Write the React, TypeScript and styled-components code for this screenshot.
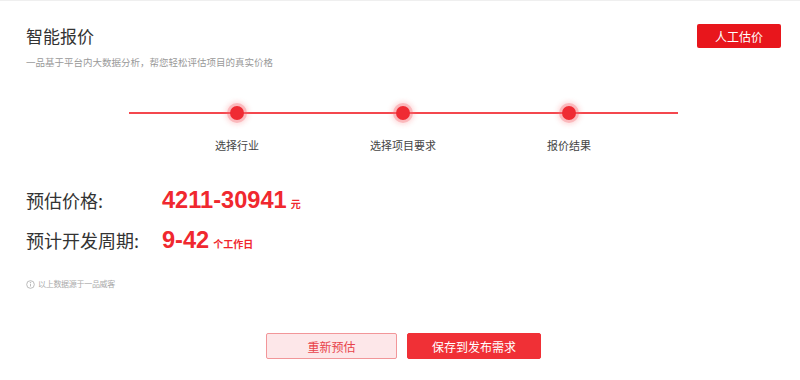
import React from 'react';
import styled, { createGlobalStyle } from 'styled-components';

const GlobalStyle = createGlobalStyle`
    html, body {
        margin: 0;
        padding: 0;
        background: #fff;
    }
    body {
        font-family: "Noto Sans CJK SC", "Liberation Sans", sans-serif;
        color: #333;
    }
`;

const Page = styled.div`
    width: 800px;
    height: 380px;
    box-sizing: border-box;
    border-top: 1px solid #efefef;
    padding: 23px 19px 0 26px;
    overflow: hidden;
`;

const Header = styled.div`
    display: flex;
    justify-content: space-between;
    align-items: flex-start;
`;

const Title = styled.h1`
    margin: 0;
    font-size: 17px;
    line-height: 24px;
    font-weight: 400;
    color: #333;
`;

const ManualButton = styled.button`
    width: 84px;
    height: 24px;
    border: none;
    border-radius: 2px;
    background: #e8161c;
    color: #fff;
    font-family: inherit;
    font-size: 12px;
    padding: 0;
    cursor: pointer;
`;

const Subtitle = styled.p`
    margin: 7px 0 0;
    font-size: 9.5px;
    line-height: 14px;
    color: #999;
`;

const Track = styled.div`
    width: 549px;
    margin: 33px auto 0;
    box-sizing: border-box;
    padding: 0 25px;
`;

const DotRow = styled.div`
    display: grid;
    grid-template-columns: repeat(3, 166px);
    height: 22px;
    margin: 0 -25px;
    padding: 0 25px;
    align-items: center;
    justify-items: center;
    background: linear-gradient(#f4474e, #f4474e) center / 100% 2px no-repeat;
`;

const Dot = styled.span`
    width: 14px;
    height: 14px;
    border-radius: 50%;
    background: #ef2b33;
    box-shadow: 0 0 0 3px rgba(246, 90, 98, 0.3), 0 0 4px 5px rgba(250, 130, 136, 0.25);
`;

const LabelRow = styled.div`
    display: grid;
    grid-template-columns: repeat(3, 166px);
    margin-top: 13px;
    justify-items: center;
`;

const StepLabel = styled.span`
    font-size: 11px;
    line-height: 16px;
    color: #444;
`;

const Results = styled.div`
    margin-top: 32px;
    display: flex;
    flex-direction: column;
    gap: 10px;
`;

const ResultRow = styled.div`
    display: flex;
    align-items: baseline;
    height: 30px;
    line-height: 30px;
`;

const ResultLabel = styled.span`
    width: 136px;
    font-size: 18px;
    color: #333;
`;

const Value = styled.span`
    font-family: "Liberation Sans", "Noto Sans CJK SC", sans-serif;
    font-weight: 700;
    font-size: 23.6px;
    color: #f0282f;
`;

const Unit = styled.span`
    margin-left: 4px;
    font-size: 10px;
    font-weight: 700;
    color: #f0282f;
`;

const Note = styled.div`
    margin-top: 23px;
    display: flex;
    align-items: center;
    gap: 3px;
    font-size: 8px;
    letter-spacing: -0.3px;
    line-height: 12px;
    color: #aaa;
`;

const Actions = styled.div`
    margin-top: 43px;
    display: flex;
    justify-content: center;
    gap: 10px;
`;

const ActionButton = styled.button<{ $primary?: boolean }>`
    height: 26px;
    width: ${p => (p.$primary ? '134px' : '131px')};
    box-sizing: border-box;
    border-radius: 2px;
    border: 1px solid ${p => (p.$primary ? '#f03036' : '#f29699')};
    background: ${p => (p.$primary ? '#f03036' : '#fde7e9')};
    color: ${p => (p.$primary ? '#fff' : '#e8434b')};
    font-family: inherit;
    font-size: 12px;
    padding: 0;
    cursor: pointer;
`;

const steps = ['选择行业', '选择项目要求', '报价结果'];

const InfoIcon = () => (
    <svg width="9" height="9" viewBox="0 0 16 16" fill="none" stroke="#b0b0b0" strokeWidth="1.5">
        <circle cx="8" cy="8" r="6.8" />
        <line x1="8" y1="7" x2="8" y2="11.5" />
        <circle cx="8" cy="4.6" r="0.6" fill="#b0b0b0" />
    </svg>
);

const App = () => (
    <>
        <GlobalStyle />
        <Page>
            <Header>
                <Title>智能报价</Title>
                <ManualButton>人工估价</ManualButton>
            </Header>
            <Subtitle>一品基于平台内大数据分析，帮您轻松评估项目的真实价格</Subtitle>

            <Track>
                <DotRow>
                    {steps.map(s => <Dot key={s} />)}
                </DotRow>
                <LabelRow>
                    {steps.map(s => <StepLabel key={s}>{s}</StepLabel>)}
                </LabelRow>
            </Track>

            <Results>
                <ResultRow>
                    <ResultLabel>预估价格:</ResultLabel>
                    <Value>4211-30941</Value>
                    <Unit>元</Unit>
                </ResultRow>
                <ResultRow>
                    <ResultLabel>预计开发周期:</ResultLabel>
                    <Value>9-42</Value>
                    <Unit>个工作日</Unit>
                </ResultRow>
            </Results>

            <Note>
                <InfoIcon />
                <span>以上数据源于一品威客</span>
            </Note>

            <Actions>
                <ActionButton>重新预估</ActionButton>
                <ActionButton $primary>保存到发布需求</ActionButton>
            </Actions>
        </Page>
    </>
);

export default App;
